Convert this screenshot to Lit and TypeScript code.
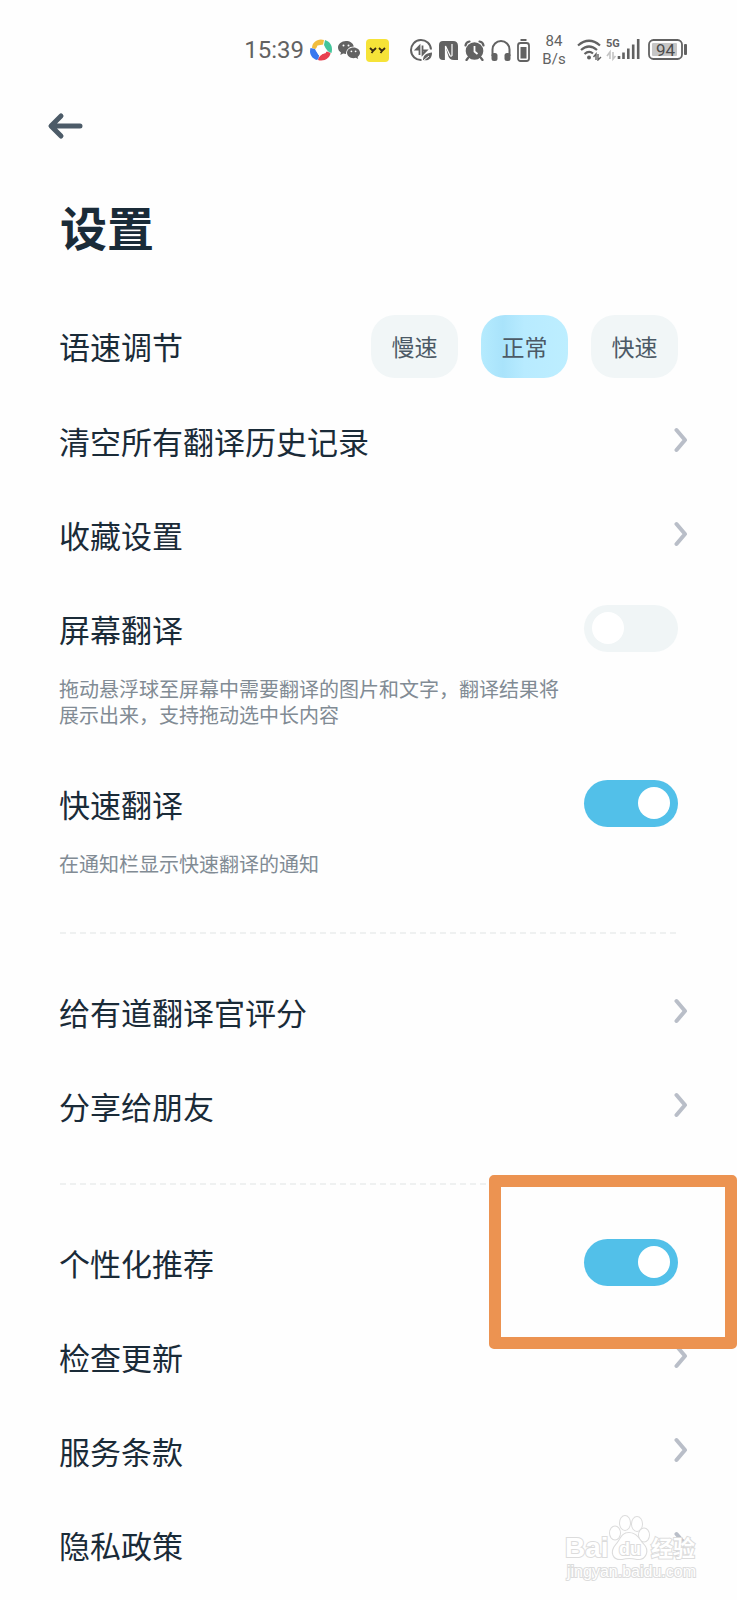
import { LitElement, html, css, nothing } from "lit";
import { customElement, property, state } from "lit/decorators.js";

@customElement("status-bar")
class StatusBar extends LitElement {
  static styles = css`
    :host {
      display: flex;
      align-items: center;
      justify-content: flex-end;
      height: 100px;
      padding-right: 50px;
      color: #626262;
      font-family: Roboto, "Noto Sans", sans-serif;
    }
    .group { display: flex; align-items: center; }
    .apps { gap: 6px; margin-right: 21px; }
    .device { gap: 6px; margin-right: 12px; }
    .network { gap: 4px; margin-right: 8px; }
    .time { font-size: 24px; line-height: 28px; }
    .speed {
      width: 24px;
      margin-right: 11px;
      font-size: 15px;
      line-height: 18px;
      text-align: center;
      white-space: nowrap;
    }
    svg { display: block; }
    .label { font: 400 17px Roboto, sans-serif; }
    .tiny { font: 700 11px Roboto, sans-serif; }
  `;

  render() {
    return html`
      <div class="group apps">
        <span class="time">15:39</span>
        <svg width="22" height="22" viewBox="0 0 22 22" aria-hidden="true">
          <path d="M2 9C2 3 8 -1 14 1L13 6L5 10Z" fill="#f1bd3e" />
          <path d="M15 1C21 3 23 8 21.500 14Q17 13 14 6Z" fill="#43c59a" />
          <path d="M20.500 14C20 19 14 23 8 21Q8 17 17 12.500Z" fill="#e8404e" />
          <path d="M7 21C1 19 -1 14 0.500 9L5 10L9 16Q9 20 7 21Z" fill="#3a78ef" />
          <path d="M7.500 6.500L13.500 5.500L16 14L8.500 16L5.500 11Z" fill="#fff" />
        </svg>
        <svg width="22" height="20" viewBox="0 0 22 20" aria-hidden="true">
          <path d="M8 1C3.500 1 0 4 0 7.500C0 9.600 1.200 11.400 3 12.600L2.300 15L5.200 13.500C6.200 13.800 7 13.900 8 13.900C8 9.500 11 6.500 15.800 6.400C15 3 12 1 8 1Z" fill="currentColor" />
          <path d="M15.500 7.400C11.800 7.400 9 9.800 9 12.800C9 15.800 11.800 18.200 15.500 18.200C16.300 18.200 17.100 18 17.800 17.800L20.200 19L19.600 17C21.100 16 22 14.500 22 12.800C22 9.800 19.100 7.400 15.500 7.400Z" fill="currentColor" />
          <g fill="#fff">
            <circle cx="5.500" cy="5.500" r="1" /><circle cx="10.500" cy="5.500" r="1" />
            <circle cx="13.400" cy="11.300" r=".9" /><circle cx="17.600" cy="11.300" r=".9" />
          </g>
        </svg>
        <svg width="23" height="23" viewBox="0 0 23 23" aria-hidden="true">
          <rect width="23" height="23" rx="4" fill="#f6e338" />
          <path d="M4 9L7 12L10 9M7 12L5.500 14M13 9L16 12L19 9M16 12L14.500 14" fill="none" stroke="#3a2b12" stroke-width="1.800" />
        </svg>
      </div>
      <div class="group device">
        <svg width="23" height="23" viewBox="0 0 23 23" fill="none" stroke="currentColor" aria-hidden="true">
          <path d="M21 10.500A10 10 0 1 0 11.500 21" stroke-width="2" />
          <path d="M9.500 16V7L6 10.500H9.500M12.500 6.500V15.500L16.500 11.500H12.500" stroke-width="1.800" />
          <path d="M13 21C13 16 17 14 22 13.500C22 19 19 22.500 13 21Z" fill="currentColor" stroke="none" />
          <path d="M13.500 21.500L19 17" stroke="#fff" />
        </svg>
        <svg width="19" height="19" viewBox="0 0 19 19" aria-hidden="true">
          <path d="M4 0H14Q19 0 19 5V19H15Q10 19 9 14L6.500 6V19H4Q0 19 0 15V4Q0 0 4 0Z" fill="currentColor" />
          <path d="M6.500 19V5L11 14.500Q12 16 13 14.500V3" fill="none" stroke="#fff" stroke-width="1.200" />
        </svg>
        <svg width="21" height="21" viewBox="0 0 21 21" aria-hidden="true">
          <circle cx="10.500" cy="11" r="8.800" fill="currentColor" />
          <path d="M1.500 5.500Q2 2 5.500 1.500M19.500 5.500Q19 2 15.500 1.500M4 18L2.500 20M17 18L18.500 20" fill="none" stroke="currentColor" stroke-width="2.200" stroke-linecap="round" />
          <path d="M10.500 6V11.500L13.500 14" fill="none" stroke="#fff" stroke-width="1.800" />
        </svg>
        <svg width="20" height="22" viewBox="0 0 20 22" aria-hidden="true">
          <path d="M1.500 17V10.500A8.500 8.500 0 0 1 18.500 10.500V17" fill="none" stroke="currentColor" stroke-width="2" />
          <rect x="0.500" y="14" width="6" height="8" rx="2.500" fill="currentColor" />
          <rect x="13.500" y="14" width="6" height="8" rx="2.500" fill="currentColor" />
        </svg>
        <svg width="13" height="23" viewBox="0 0 13 23" aria-hidden="true">
          <path d="M3.500 1H9.500" stroke="currentColor" stroke-width="2" />
          <rect x="1" y="4" width="11" height="18" rx="2.500" fill="none" stroke="currentColor" stroke-width="1.800" />
          <rect x="3.500" y="8" width="6" height="11.500" fill="currentColor" />
        </svg>
      </div>
      <div class="speed">84<br />B/s</div>
      <div class="group network">
        <svg width="25" height="22" viewBox="0 0 25 22" fill="none" stroke="currentColor" aria-hidden="true">
          <path d="M1 6.500Q12 -3 23 6.500M4 11Q12 4 20 11M7.500 15Q12 11 16 14.500" stroke-width="2.200" />
          <circle cx="12" cy="18.500" r="2" fill="currentColor" stroke="none" />
          <path d="M19 21V15L16.500 18M21 15V21L24 18" stroke-width="1.400" />
        </svg>
        <svg width="34" height="24" viewBox="0 0 34 24" aria-hidden="true">
          <text class="tiny" x="0" y="9" fill="currentColor">5G</text>
          <path d="M4 21V14L1 18M7 14V21L9.500 18" fill="none" stroke="#c4c4c4" stroke-width="1.600" />
          <path d="M13 21V18M17.500 21V14.500M22.300 21V10.500M27.200 21V6.500M32.200 21V1" stroke="currentColor" stroke-width="2.600" />
        </svg>
      </div>
      <svg width="39" height="22" viewBox="0 0 39 22" aria-hidden="true">
        <rect x="1" y="1" width="33" height="19" rx="4.500" fill="none" stroke="currentColor" stroke-width="1.800" />
        <rect x="4" y="4" width="25" height="13" rx="1" fill="#c6c6c6" />
        <rect x="36" y="5" width="3" height="11" rx="1" fill="currentColor" />
        <text class="label" x="17.500" y="16.500" text-anchor="middle" fill="#4d4d4d">94</text>
      </svg>
    `;
  }
}

@customElement("setting-row")
class SettingRow extends LitElement {
  @property() label = "";
  @property() note = "";
  @property() kind: "link" | "switch" = "link";
  @property({ type: Boolean }) checked = false;
  @property({ type: Boolean }) highlighted = false;

  static styles = css`
    :host { display: block; position: relative; }
    .row {
      box-sizing: border-box;
      display: flex;
      align-items: center;
      justify-content: space-between;
      height: 94px;
      padding: 0 59px;
      color: #1a2b38;
      font-size: 31px;
      line-height: 44px;
      text-decoration: none;
    }
    .link { padding-right: 49px; }
    .text { padding-top: 2px; }
    .note {
      margin: 1px 0 0;
      padding: 0 177px 0 59px;
      color: #818b94;
      font-size: 20px;
      line-height: 26px;
    }
    .switch {
      appearance: none;
      flex: none;
      box-sizing: border-box;
      width: 94px;
      height: 47px;
      margin: 0;
      padding: 0 8px;
      display: flex;
      align-items: center;
      border-radius: 24px;
      background: #f0f5f6;
    }
    .switch::before {
      content: "";
      width: 32px;
      height: 32px;
      border-radius: 50%;
      background: #fff;
    }
    .switch:checked { justify-content: flex-end; background: #52c0e9; }
    .frame {
      position: absolute;
      z-index: 1;
      top: -40px;
      right: 0;
      box-sizing: border-box;
      width: 248px;
      height: 174px;
      border: 12px solid #ec9351;
      border-radius: 5px;
      pointer-events: none;
    }
  `;

  render() {
    if (this.kind === "link") {
      return html`
        <a class="row link" href="#">
          <span class="text">${this.label}</span>
          <svg width="14" height="26" viewBox="0 0 14 26" aria-hidden="true">
            <path d="M2.500 3L11 13L2.500 23" fill="none" stroke="#b9bec8" stroke-width="4" stroke-linecap="round" stroke-linejoin="round" />
          </svg>
        </a>
      `;
    }
    return html`
      <div class="row">
        <label class="text" for="toggle">${this.label}</label>
        <input class="switch" id="toggle" type="checkbox" role="switch" .checked=${this.checked} />
      </div>
      ${this.note ? html`<p class="note">${this.note}</p>` : nothing}
      ${this.highlighted ? html`<div class="frame"></div>` : nothing}
    `;
  }
}

@customElement("app-root")
class AppRoot extends LitElement {
  @state() private speed = "正常";

  static styles = css`
    :host {
      display: block;
      position: relative;
      box-sizing: border-box;
      min-height: 100vh;
      padding-bottom: 8px;
      overflow: hidden;
      background: #fefefe;
      color: #1a2b38;
      font-family: "Noto Sans CJK SC", sans-serif;
    }
    .back {
      display: block;
      margin: 12px 0 0 47px;
      padding: 0;
      border: 0;
      background: none;
    }
    .back svg { display: block; }
    .title {
      margin: 52px 60px 39px;
      font-size: 47px;
      line-height: 68px;
      font-weight: 700;
    }
    .speeds {
      display: flex;
      align-items: center;
      justify-content: space-between;
      height: 94px;
      margin: 0;
      padding: 0 59px;
      font-size: 31px;
      line-height: 44px;
    }
    .chips { display: flex; gap: 23px; }
    .chip {
      position: relative;
      display: flex;
      align-items: center;
      justify-content: center;
      width: 87px;
      height: 63px;
      border-radius: 24px;
      background: #f1f6f7;
      color: #4c5a66;
      font-size: 23px;
      line-height: 32px;
    }
    .chip input { position: absolute; inset: 0; margin: 0; opacity: 0; }
    .chip:has(input:checked) {
      background: linear-gradient(90deg, #b5ebfe, #a9e3fb 25%, #b8ebff 50%, #bdeeff);
    }
    .noted { padding-bottom: 28px; }
    .noted.last { padding-bottom: 24px; }
    .divider {
      height: 2px;
      margin: 31px 60px 30px;
      border: 0;
      background: repeating-linear-gradient(90deg, #eff1f1 0 6px, transparent 6px 10px);
    }
    .watermark {
      position: absolute;
      z-index: 2;
      right: 32px;
      bottom: 15px;
      fill: #fff;
      stroke: #dcdcdc;
      stroke-width: 2px;
      paint-order: stroke;
      pointer-events: none;
    }
    .brand { font: 700 28px "Liberation Sans", sans-serif; }
    .inner { font: 700 18px "Liberation Sans", sans-serif; }
    .word { font: 700 22px "Noto Sans CJK SC", sans-serif; }
    .site { font: 400 16px "Liberation Sans", sans-serif; }
  `;

  render() {
    return html`
      <status-bar></status-bar>
      <button class="back" aria-label="返回">
        <svg width="36" height="28" viewBox="0 0 36 28" aria-hidden="true">
          <path d="M14 4L4 14L14 24M5 14H33" fill="none" stroke="#4c5b68" stroke-width="5" stroke-linecap="round" stroke-linejoin="round" />
        </svg>
      </button>
      <h1 class="title">设置</h1>
      <div class="speeds" role="radiogroup" aria-labelledby="speed-caption">
        <span id="speed-caption">语速调节</span>
        <div class="chips">
          ${["慢速", "正常", "快速"].map(
            (name) => html`
              <label class="chip">
                <input
                  type="radio"
                  name="speed"
                  .checked=${this.speed === name}
                  @change=${() => (this.speed = name)}
                />
                <span>${name}</span>
              </label>
            `,
          )}
        </div>
      </div>
      <setting-row label="清空所有翻译历史记录"></setting-row>
      <setting-row label="收藏设置"></setting-row>
      <setting-row
        class="noted"
        kind="switch"
        label="屏幕翻译"
        note="拖动悬浮球至屏幕中需要翻译的图片和文字，翻译结果将展示出来，支持拖动选中长内容"
      ></setting-row>
      <setting-row class="noted last" kind="switch" label="快速翻译" note="在通知栏显示快速翻译的通知" checked></setting-row>
      <hr class="divider" />
      <setting-row label="给有道翻译官评分"></setting-row>
      <setting-row label="分享给朋友"></setting-row>
      <hr class="divider" />
      <setting-row kind="switch" label="个性化推荐" checked highlighted></setting-row>
      <setting-row label="检查更新"></setting-row>
      <setting-row label="服务条款"></setting-row>
      <setting-row label="隐私政策"></setting-row>
      <svg class="watermark" width="145" height="74" viewBox="0 0 145 74">
        <text class="brand" x="5" y="46">Bai</text>
        <ellipse cx="55" cy="22" rx="5" ry="6.500" />
        <ellipse cx="65" cy="12" rx="5" ry="7" />
        <ellipse cx="77" cy="13" rx="5" ry="7" />
        <ellipse cx="84" cy="24" rx="5" ry="6.500" />
        <path d="M69 22C77 22 79 29 83 33C90 40 85 49 77 48Q69 46 62 48C53 49 50 41 56 34C61 29 61 22 69 22Z" />
        <text class="inner" x="59" y="44">du</text>
        <text class="word" x="91" y="45">经验</text>
        <text class="site" x="7" y="66">jingyan.baidu.com</text>
      </svg>
    `;
  }
}
